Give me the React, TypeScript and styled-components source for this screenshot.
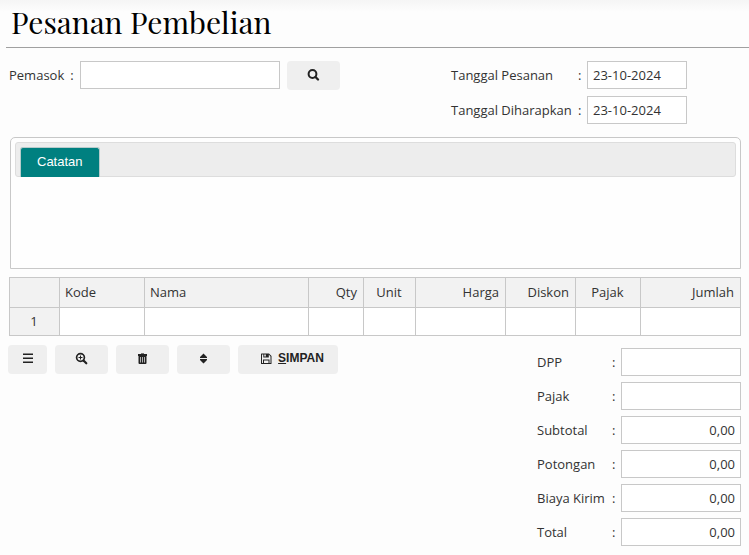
import React from "react";
import styled, { createGlobalStyle, css } from "styled-components";

const GlobalStyle = createGlobalStyle`
  *, *::before, *::after { box-sizing: border-box; }
  body {
    margin: 0;
    background: #fdfdfd;
    color: #333;
    font: 13px/20px "Open Sans", "Noto Sans", sans-serif;
  }
`;

type Align = "left" | "center" | "right";

const Page = styled.main`
  padding: 0 8px 8px;
  background: linear-gradient(#f5f5f5, #fdfdfd 12px);
`;

const Title = styled.h1`
  margin: 0 -8px 13px -2px;
  padding: 0 5px;
  height: 48px;
  border-bottom: 1px solid #a0a0a0;
  color: #000;
  font: 400 30px/44px "Playfair Display", "Liberation Serif", serif;
`;

const HeaderForm = styled.section`
  display: grid;
  grid-template-columns: 443px 1fr;
  align-items: start;
  margin-bottom: 13px;
`;

const Supplier = styled.div`
  display: flex;
  align-items: flex-start;
  padding-left: 1px;
  line-height: 28px;
`;

const Fields = styled.div<{ $gap: number }>`
  display: grid;
  gap: ${(p) => p.$gap}px;
`;

const Field = styled.div<{ $label: number }>`
  display: grid;
  grid-template-columns: ${(p) => p.$label}px 9px auto;
  justify-content: start;
  align-items: center;
`;

const TextBox = styled.input<{ $width: number; $align?: Align }>`
  width: ${(p) => p.$width}px;
  height: 28px;
  padding: 0 5px;
  border: 1px solid #c8c8c8;
  border-radius: 0;
  background: #fff;
  color: #333;
  font: inherit;
  text-align: ${(p) => p.$align ?? "left"};
`;

const Colon = styled.span`
  white-space: pre;
`;

const SupplierColon = styled(Colon)`
  margin: 0 6px;
`;

const Button = styled.button<{ $width?: number }>`
  display: inline-flex;
  align-items: center;
  justify-content: center;
  gap: 5px;
  width: ${(p) => p.$width ?? 53}px;
  height: 29px;
  padding: 0 0 2px;
  border: 0;
  border-radius: 4px;
  background: #efefef;
  color: #222;
  font: bold 12px/15px "Liberation Sans", Arial, sans-serif;
`;

const SearchButton = styled(Button)`
  margin-left: 7px;
`;

const SaveButton = styled(Button)`
  padding-left: 8px;
`;

const NotePanel = styled.section`
  margin: 0 0 8px 2px;
  padding: 4px;
  border: 1px solid #c8c8c8;
  border-radius: 5px 5px 0 0;
  background: #fefefe;
`;

const TabBar = styled.div`
  display: flex;
  align-items: flex-end;
  height: 35px;
  padding: 0 4px;
  border: 1px solid #ddd;
  border-radius: 3px;
  background: #ededed;
`;

const Tab = styled.button`
  height: 30px;
  margin-bottom: -1px;
  padding: 0 16px 1px;
  border: 1px solid #b8cccc;
  border-width: 1px 1px 0;
  border-radius: 3px 3px 0 0;
  background: #008080;
  color: #fff;
  font: 13px/20px "Liberation Sans", Arial, sans-serif;
`;

const NoteArea = styled.textarea`
  display: block;
  width: 100%;
  height: 87px;
  padding: 4px;
  border: 0;
  outline: 0;
  resize: none;
  background: transparent;
  font: inherit;
`;

const Table = styled.table`
  width: calc(100% - 1px);
  margin-left: 1px;
  border-collapse: collapse;
  table-layout: fixed;
  background: #fff;
`;

const cell = css`
  padding: 0 6px 2px 5px;
  border: 1px solid #c8c8c8;
  font-weight: 400;
`;

const HeadCell = styled.th<{ $align: Align }>`
  ${cell}
  height: 30px;
  background: #f2f2f2;
  text-align: ${(p) => p.$align};
`;

const RowNumber = styled.th`
  ${cell}
  height: 28px;
  background: #f2f2f2;
  text-align: center;
`;

const Cell = styled.td`
  ${cell}
`;

const Column = styled.col<{ $width?: number }>`
  width: ${(p) => (p.$width ? `${p.$width}px` : "auto")};
`;

const Footer = styled.section`
  display: flex;
  justify-content: space-between;
  align-items: flex-start;
  padding-top: 9px;
`;

const Toolbar = styled.div`
  display: flex;
  gap: 8px;
`;

const Totals = styled(Fields)`
  padding-top: 3px;
`;

const IconBox = styled.svg`
  display: block;
  width: 13px;
  height: 13px;
  fill: currentColor;
`;

const Icon = ({ children }: { children: React.ReactNode }) => (
  <IconBox viewBox="0 0 13 13" aria-hidden="true">
    {children}
  </IconBox>
);

const columns: { name: string; width?: number; align: Align }[] = [
  { name: "", width: 50, align: "center" },
  { name: "Kode", width: 85, align: "left" },
  { name: "Nama", align: "left" },
  { name: "Qty", width: 55, align: "right" },
  { name: "Unit", width: 52, align: "center" },
  { name: "Harga", width: 90, align: "right" },
  { name: "Diskon", width: 70, align: "right" },
  { name: "Pajak", width: 65, align: "center" },
  { name: "Jumlah", width: 100, align: "right" },
];

const dates = [
  { id: "order-date", label: "Tanggal Pesanan" },
  { id: "expected-date", label: "Tanggal Diharapkan" },
];

const totals = [
  { id: "dpp", label: "DPP", value: "" },
  { id: "tax", label: "Pajak", value: "" },
  { id: "subtotal", label: "Subtotal", value: "0,00" },
  { id: "discount", label: "Potongan", value: "0,00" },
  { id: "shipping", label: "Biaya Kirim", value: "0,00" },
  { id: "total", label: "Total", value: "0,00" },
];

const SearchIcon = () => (
  <Icon>
    <circle cx="5.500" cy="6" r="3.900" fill="none" stroke="currentColor" strokeWidth="2" />
    <path d="M8.500 9l2.500 2.500" stroke="currentColor" strokeWidth="2.300" strokeLinecap="round" />
  </Icon>
);

const ZoomIcon = () => (
  <Icon>
    <circle cx="5.500" cy="5.500" r="3.900" fill="none" stroke="currentColor" strokeWidth="1.700" />
    <path d="M8.500 8.500l2.800 2.800" stroke="currentColor" strokeWidth="2.200" strokeLinecap="round" />
    <path d="M5 3.500h1V5h1.500v1H6v1.500H5V6H3.500V5H5z" />
  </Icon>
);

const ListIcon = () => (
  <Icon>
    <path d="M2 1.400h10V3H2zM2 5.400h10V7H2zM2 9.400h10V11H2z" />
  </Icon>
);

const TrashIcon = () => (
  <Icon>
    <path d="M5 1h3v1H5z" opacity="0.6" />
    <path
      fillRule="evenodd"
      d="M2 2h9v2h-.5v7q0 1-1 1h-6q-1 0-1-1V4H2zM4.200 5v5.500h.7V5zM6.150 5v5.500h.7V5zM8.100 5v5.500h.7V5z"
    />
  </Icon>
);

const SortIcon = () => (
  <Icon>
    <path d="M6.500 1.500 10 5v1H3V5zM6.500 11.500 10 8V7H3v1z" />
  </Icon>
);

const SaveIcon = () => (
  <Icon>
    <path
      fillRule="evenodd"
      d="M1 2q0-.5.5-.5H9L11.500 4v7.500q0 .5-.5.5H1.500Q1 12 1 11.500zM2 2.500V11h1V7.500h6.500V11h1V4.500L8.800 2.500V5.500H3.300v-3zM4.300 2.500v2h1.500v-2zM4 8.500V11h4.500V8.500z"
    />
  </Icon>
);

export default function App() {
  return (
    <>
      <GlobalStyle />
      <Page>
        <Title>Pesanan Pembelian</Title>
        <HeaderForm>
          <Supplier>
            <label htmlFor="supplier">Pemasok</label>
            <SupplierColon>:</SupplierColon>
            <TextBox id="supplier" $width={200} />
            <SearchButton type="button" aria-label="Cari pemasok">
              <SearchIcon />
            </SearchButton>
          </Supplier>
          <Fields $gap={7}>
            {dates.map((d) => (
              <Field key={d.id} $label={127}>
                <label htmlFor={d.id}>{d.label}</label>
                <Colon>:</Colon>
                <TextBox id={d.id} $width={100} defaultValue="23-10-2024" />
              </Field>
            ))}
          </Fields>
        </HeaderForm>

        <NotePanel>
          <TabBar role="tablist">
            <Tab type="button" role="tab" aria-selected="true">
              Catatan
            </Tab>
          </TabBar>
          <NoteArea aria-label="Catatan" />
        </NotePanel>

        <Table>
          <colgroup>
            {columns.map((c) => (
              <Column key={c.name} $width={c.width} />
            ))}
          </colgroup>
          <thead>
            <tr>
              {columns.map((c) => (
                <HeadCell key={c.name} scope="col" $align={c.align}>
                  {c.name}
                </HeadCell>
              ))}
            </tr>
          </thead>
          <tbody>
            <tr>
              <RowNumber scope="row">1</RowNumber>
              {columns.slice(1).map((c) => (
                <Cell key={c.name} />
              ))}
            </tr>
          </tbody>
        </Table>

        <Footer>
          <Toolbar>
            <Button type="button" $width={39} aria-label="Menu">
              <ListIcon />
            </Button>
            <Button type="button" aria-label="Lihat">
              <ZoomIcon />
            </Button>
            <Button type="button" aria-label="Hapus">
              <TrashIcon />
            </Button>
            <Button type="button" aria-label="Urutkan">
              <SortIcon />
            </Button>
            <SaveButton type="button" $width={100}>
              <SaveIcon />
              <span>
                <u>S</u>IMPAN
              </span>
            </SaveButton>
          </Toolbar>
          <Totals $gap={6}>
            {totals.map((t) => (
              <Field key={t.id} $label={75}>
                <label htmlFor={t.id}>{t.label}</label>
                <Colon>:</Colon>
                <TextBox id={t.id} $width={120} $align="right" defaultValue={t.value} />
              </Field>
            ))}
          </Totals>
        </Footer>
      </Page>
    </>
  );
}
